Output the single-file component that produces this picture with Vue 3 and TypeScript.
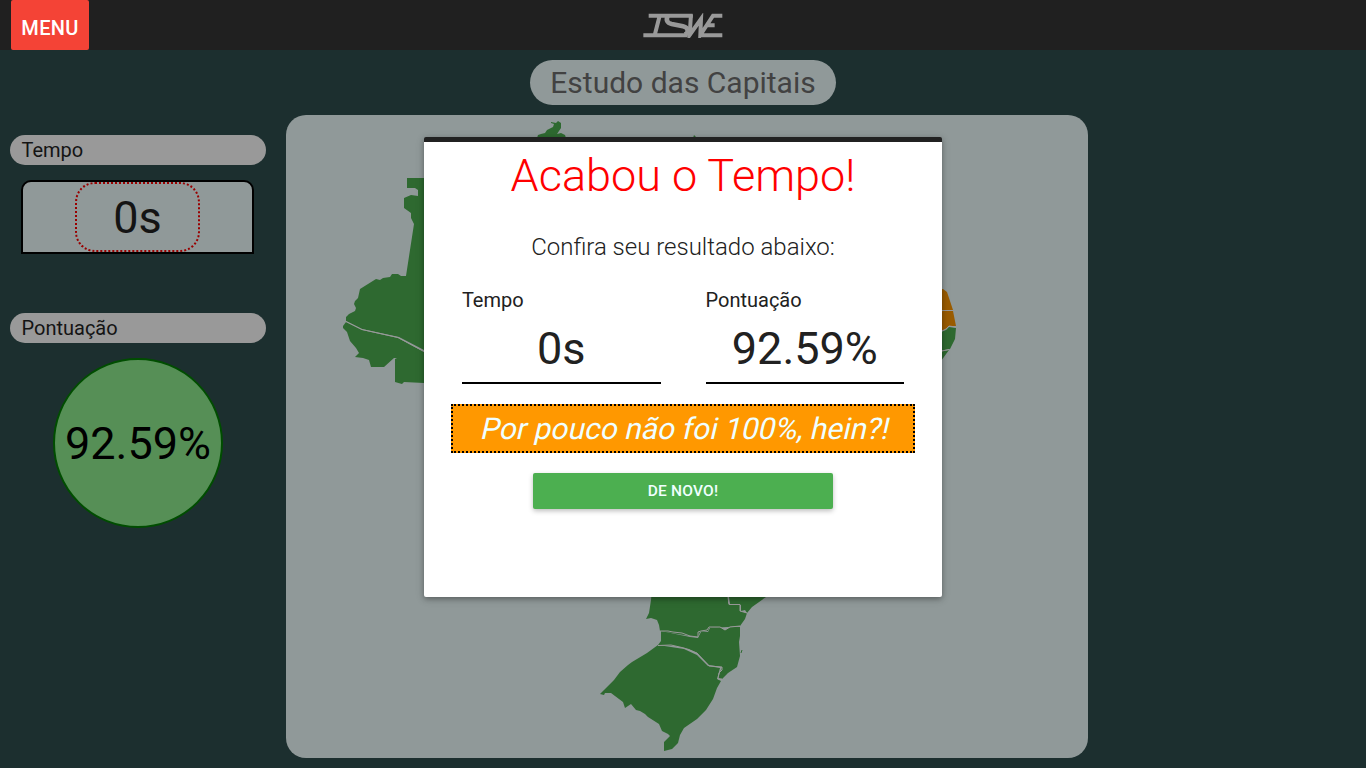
<script setup lang="ts">
interface Region {
  name: string
  tone: 'hit' | 'late'
  d: string
}

const score = '92.59%'
const time = '0s'

const regions: Region[] = [
  { name: 'roraima', tone: 'hit', d: 'M537 138L538 135 541 134 545 133 547 130 551 128 553 127 554 124 551 123 551 122 556 123 558 121 561 123 561 128 557 134 561 133 565 135 566 138Z' },
  { name: 'amapa', tone: 'hit', d: 'M693 138L694 135 697 138Z' },
  { name: 'amazonas', tone: 'hit', d: 'M346 321L346 317 349 314 355 311 356 308 354 304 355 301 358 298 360 289 368 284 376 279 380 280 383 278 390 277 392 274 398 274 401 276 406 276 414 224 411 218 411 213 404 208 404 198 411 195 418 196 418 190 415 188 407 188V178H430V354L424 350 399 337 362 329Z' },
  { name: 'acre', tone: 'hit', d: 'M346 322L362 330 398 338 424 352H430V383L424 383 404 382 402 384 395 382 395 359 397 358 394 358 384 367 371 367 369 360 363 358 355 357 359 353 356 348 350 341 347 332 343 328 343 326Z' },
  { name: 'rio-grande-do-norte', tone: 'late', d: 'M938 289H943L947 292 953 310 942 310 938 312Z' },
  { name: 'paraiba', tone: 'late', d: 'M938 312L943 311 953 311 956 326 949 326 946 329 938 332Z' },
  { name: 'pernambuco', tone: 'hit', d: 'M938 333L946 330 949 327 956 328 955 339 950 349 938 351Z' },
  { name: 'alagoas', tone: 'hit', d: 'M938 352L949 350 941 361 938 364Z' },
  { name: 'parana', tone: 'hit', d: 'M652 590H728V603L730 605H740V611L747 613 745 619 740 626 728 627 709 628 708 631 700 632 698 637 690 636 660 631 659 625 657 620 651 618 646 619 649 613 651 600Z' },
  { name: 'sao-paulo', tone: 'hit', d: 'M728 590H774L766 597 752 607 747 613 745 610 741 611 741 605 730 604Z' },
  { name: 'santa-catarina', tone: 'hit', d: 'M661 631L690 637 698 638 701 632 708 632 710 628 720 627 725 630 730 627 740 627 740 636 739 642 740 656 737 667 728 673 722 679 718 678 722 667 709 665 697 653 689 649 675 646 658 645 661 641Z' },
  { name: 'rio-grande-do-sul', tone: 'hit', d: 'M658 645L684 649 697 655 708 666 720 668 717 679 721 681 717 688 713 699 706 710 697 719 684 728 680 735 678 743 672 749 664 751 664 742 670 736 668 734 662 731 659 724 648 717 645 714 640 711 636 710 631 704 628 706 625 708 623 702 611 693 605 693 604 695 600 694 604 690 614 680 620 672 628 665 632 662 647 653Z' },
]
</script>

<template>
  <div class="app">
    <header class="bar">
      <button class="menu">MENU</button>
      <svg class="logo" viewBox="38 38 240 76" fill="none" stroke="#999" stroke-width="12">
        <path d="M55 46H187M88 46L73 105M39 105H172" />
        <path stroke-width="14" d="M112 47C106 60 111 68 124 71L158 78C176 82 176 98 163 103" />
        <path d="M182 42L178 104L212 56L210 104L248 46H276M228 75H253M206 105H276" />
      </svg>
    </header>

    <h1 class="title">Estudo das Capitais</h1>

    <main class="board">
      <aside class="side">
        <h2 class="label">Tempo</h2>
        <div class="clock"><span class="ring">{{ time }}</span></div>
        <h2 class="label second">Pontuação</h2>
        <div class="score">{{ score }}</div>
      </aside>
      <section class="map">
        <svg viewBox="286 115 802 643" width="802" height="643">
          <path v-for="r in regions" :key="r.name" :class="r.tone" :d="r.d" />
          <path class="line" d="M346 321.500L362 329.500 398 337.500 424 351.500M942 310.500L953 310.500M942 331L946 329 949 326 956 327M942 351L949 349.500" />
          <path class="line" d="M728 597L729 604.500H740V611L747 613M660 631L668 631 673 632 682 633 690 636 698 637 698 632 701 631 707 630 709 627 720 627 725 630 730 627 740 626M658 645.500L671 645 684 648 697 653 709 666 722 667 722 670 719 673 718 679 722 679" />
          <path class="islet" d="M742 650L741 653" />
        </svg>
      </section>
    </main>

    <div class="overlay">
      <div class="modal">
        <h2 class="over">Acabou o Tempo!</h2>
        <p class="check">Confira seu resultado abaixo:</p>
        <div class="results">
          <div class="result">
            <span class="name">Tempo</span>
            <span class="value">{{ time }}</span>
          </div>
          <div class="result">
            <span class="name">Pontuação</span>
            <span class="value">{{ score }}</span>
          </div>
        </div>
        <p class="message"><span class="slant">Por pouco não foi 100%, hein?!</span></p>
        <button class="again">DE NOVO!</button>
      </div>
    </div>
  </div>
</template>

<style>
body {
  margin: 0;
  overflow: hidden;
}
</style>

<style scoped>
* {
  box-sizing: border-box;
}
.app {
  height: 768px;
  background: #1c2f2f;
  font-family: Roboto, sans-serif;
  color: #141414;
}
h1, h2, p {
  margin: 0;
  font-weight: 400;
}
button {
  border: 0;
  padding: 0;
  font-family: inherit;
  font-weight: 500;
}
.bar {
  height: 50px;
  background: #202020;
  display: grid;
  grid-template-columns: 1fr 80px 1fr;
  align-items: start;
}
.menu {
  width: 78px;
  height: 50px;
  margin-left: 11px;
  padding-top: 6px;
  border-radius: 2px;
  background: #f44336;
  color: #fff;
  font-size: 20px;
  letter-spacing: 0.3px;
}
.logo {
  width: 80px;
  height: 25.330px;
  margin-top: 12.670px;
}
.title {
  width: 306px;
  height: 45px;
  margin: 10px auto;
  border-radius: 25px;
  background: #909999;
  color: #424242;
  font-size: 30px;
  line-height: 45px;
  text-align: center;
}
.board {
  display: flex;
  gap: 20px;
  padding-left: 10px;
}
.side {
  width: 256px;
  padding-top: 20px;
}
.label {
  height: 30px;
  padding-left: 11.500px;
  border-radius: 15px;
  background: #999;
  font-size: 20px;
  line-height: 30px;
}
.clock {
  width: 233px;
  height: 74px;
  margin: 15px 0 0 11px;
  border: 2px solid #000;
  border-radius: 10px 10px 0 0;
  background: #909999;
  display: flex;
  justify-content: center;
}
.ring {
  width: 125px;
  height: 70px;
  border: 2px dotted #900;
  border-radius: 20px;
  font-size: 45px;
  line-height: 68px;
  text-align: center;
}
.second {
  margin-top: 59px;
}
.score {
  width: 170px;
  height: 170px;
  margin: 15px auto 0;
  border: 2px solid #004d00;
  border-radius: 50%;
  background: #568f56;
  color: #000;
  font-size: 45px;
  line-height: 168px;
  text-align: center;
}
.map {
  width: 802px;
  height: 643px;
  border-radius: 20px;
  background: #909999;
}
.map svg {
  display: block;
}
.hit {
  fill: #2e6930;
}
.late {
  fill: #995b00;
}
.line {
  fill: none;
  stroke: #999;
  stroke-width: 1;
}
.islet {
  stroke: #2e6930;
  stroke-width: 1;
}
.overlay {
  position: absolute;
  inset: 0;
}
.modal {
  width: 518px;
  height: 460px;
  margin: 137px auto 0;
  border-top: 5px solid #212121;
  border-radius: 2px;
  background: #fff;
  color: #212121;
  box-shadow: 0 2px 5px rgba(0, 0, 0, 0.26), 0 2px 10px rgba(0, 0, 0, 0.16);
  display: flex;
  flex-direction: column;
  align-items: center;
}
.over {
  height: 68px;
  color: #f00;
  font-size: 45px;
  font-weight: 300;
  line-height: 68px;
}
.check {
  margin-top: 19px;
  font-size: 24px;
  font-weight: 300;
  line-height: 36px;
}
.results {
  display: flex;
  gap: 45px;
  margin-top: 20px;
}
.result {
  width: 198.600px;
  height: 99px;
  border-bottom: 2px solid #000;
  display: flex;
  flex-direction: column;
}
.name {
  font-size: 20px;
  line-height: 30px;
}
.value {
  font-size: 45px;
  line-height: 67px;
  text-align: center;
}
.message {
  width: 464px;
  height: 49px;
  margin-top: 20px;
  border: 2px dotted #000;
  background: #ff9800;
  color: #f0ffff;
  font-size: 30px;
  line-height: 45px;
  text-align: center;
}
.slant {
  display: inline-block;
  transform: skewX(-13deg);
  transform-origin: 50% 78%;
}
.again {
  width: 300px;
  height: 36px;
  margin-top: 20px;
  border-radius: 2px;
  background: #4caf50;
  color: #f0ffff;
  font-size: 15.500px;
  letter-spacing: 0.2px;
  box-shadow: 0 2px 5px rgba(0, 0, 0, 0.26);
}
</style>
